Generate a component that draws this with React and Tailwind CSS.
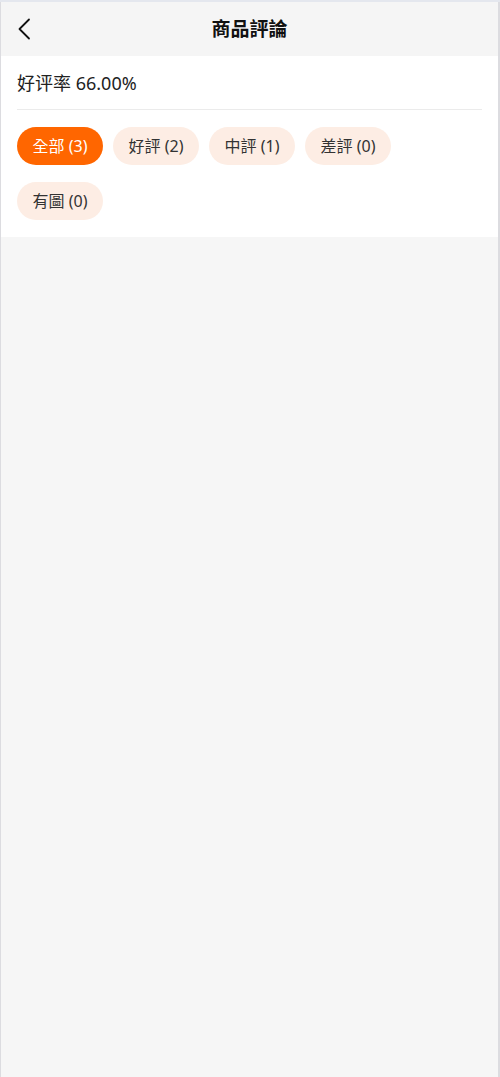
import React from "react";

const tags = [
  { label: "全部 (3)", active: true },
  { label: "好評 (2)" },
  { label: "中評 (1)" },
  { label: "差評 (0)" },
  { label: "有圖 (0)" },
];

export default function App() {
  return (
    <div
      className="min-h-[1077px] w-[500px] bg-[#e4e7ee] pt-[2px]"
      style={{ fontFamily: '"Noto Sans", "Noto Sans CJK TC", sans-serif' }}
    >
      <div className="flex min-h-[1075px] flex-col border-l border-r-2 border-[#dcdce0] bg-[#f6f6f6]">
        <header className="relative flex h-[54px] items-center justify-center bg-[#f5f5f5]">
          <button className="absolute left-[12px] top-[12px] p-1">
            <svg width="14" height="22" viewBox="0 0 14 22" fill="none">
              <path d="M12 1.5 L2.5 11 L12 20.5" stroke="#111" strokeWidth="1.8" strokeLinecap="round" strokeLinejoin="round" />
            </svg>
          </button>
          <h1 className="text-[19px] font-bold text-[#111]">商品評論</h1>
        </header>
        <section className="bg-white px-[16px] pb-[17px]">
          <div className="flex h-[54px] items-center border-b border-[#ebebeb] pt-[2px] text-[18px] text-[#222]">
            好评率 66.00%
          </div>
          <div className="flex flex-wrap gap-x-[10px] gap-y-[17px] pt-[17px]">
            {tags.map((t) => (
              <span
                key={t.label}
                className={
                  t.active
                    ? "flex h-[38px] w-[86px] items-center justify-center rounded-full bg-[#ff6600] text-[16px] text-white"
                    : "flex h-[38px] w-[86px] items-center justify-center rounded-full bg-[#fdede4] text-[16px] text-[#333]"
                }
              >
                {t.label}
              </span>
            ))}
          </div>
        </section>
      </div>
    </div>
  );
}
